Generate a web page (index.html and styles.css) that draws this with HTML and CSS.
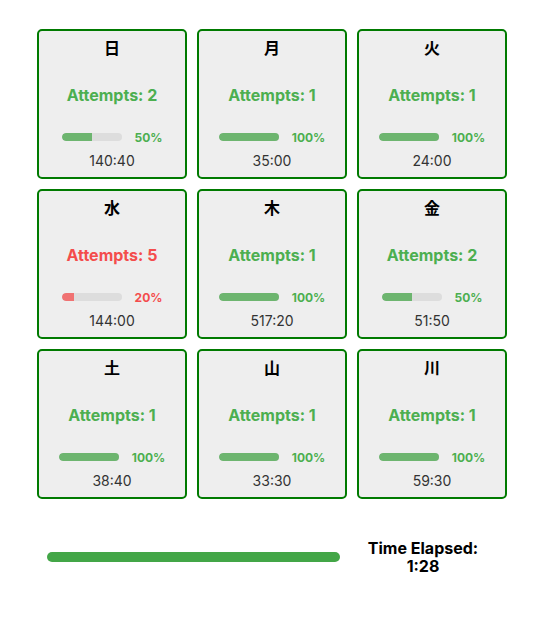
FILE: index.html
```html
<!DOCTYPE html>
<html>
<head>
<meta charset="utf-8">
<link rel="stylesheet" href="styles.css">
</head>
<body>
<div class="page">
  <div class="grid">
    <div class="card"><div class="kanji">日</div><div class="attempts">Attempts: 2</div><div class="prog"><div class="bar"><div class="fill" style="width:50%"></div></div><span class="pct">50%</span></div><div class="time">140:40</div></div>
    <div class="card"><div class="kanji">月</div><div class="attempts">Attempts: 1</div><div class="prog"><div class="bar"><div class="fill" style="width:100%"></div></div><span class="pct">100%</span></div><div class="time">35:00</div></div>
    <div class="card"><div class="kanji">火</div><div class="attempts">Attempts: 1</div><div class="prog"><div class="bar"><div class="fill" style="width:100%"></div></div><span class="pct">100%</span></div><div class="time">24:00</div></div>
    <div class="card bad"><div class="kanji">水</div><div class="attempts">Attempts: 5</div><div class="prog"><div class="bar"><div class="fill" style="width:20%"></div></div><span class="pct">20%</span></div><div class="time">144:00</div></div>
    <div class="card"><div class="kanji">木</div><div class="attempts">Attempts: 1</div><div class="prog"><div class="bar"><div class="fill" style="width:100%"></div></div><span class="pct">100%</span></div><div class="time">517:20</div></div>
    <div class="card"><div class="kanji">金</div><div class="attempts">Attempts: 2</div><div class="prog"><div class="bar"><div class="fill" style="width:50%"></div></div><span class="pct">50%</span></div><div class="time">51:50</div></div>
    <div class="card"><div class="kanji">土</div><div class="attempts">Attempts: 1</div><div class="prog"><div class="bar"><div class="fill" style="width:100%"></div></div><span class="pct">100%</span></div><div class="time">38:40</div></div>
    <div class="card"><div class="kanji">山</div><div class="attempts">Attempts: 1</div><div class="prog"><div class="bar"><div class="fill" style="width:100%"></div></div><span class="pct">100%</span></div><div class="time">33:30</div></div>
    <div class="card"><div class="kanji">川</div><div class="attempts">Attempts: 1</div><div class="prog"><div class="bar"><div class="fill" style="width:100%"></div></div><span class="pct">100%</span></div><div class="time">59:30</div></div>
  </div>
  <div class="footer">
    <div class="timer"></div>
    <div class="elapsed">Time Elapsed:<br>1:28</div>
  </div>
</div>
</body>
</html>
```
FILE: styles.css
```css
html, body {
  margin: 0;
  padding: 0;
  background: #fff;
  font-family: Inter, "Noto Sans CJK JP", sans-serif;
}
.page {
  padding: 29px 0 0 37px;
}
.grid {
  display: grid;
  grid-template-columns: repeat(3, 150px);
  grid-auto-rows: 150px;
  gap: 10px;
}
.card {
  box-sizing: border-box;
  border: 2px solid #007a00;
  border-radius: 5px;
  background: #eeeeee;
  padding: 6px 4px 0;
  display: flex;
  flex-direction: column;
  align-items: center;
}
.kanji {
  font-family: "Noto Sans CJK JP", sans-serif;
  font-weight: 700;
  font-size: 16px;
  line-height: 20px;
  color: #000;
}
.attempts {
  margin-top: 28px;
  font-size: 16px;
  line-height: 20px;
  font-weight: 700;
  color: #4caf50;
}
.bad .attempts, .bad .pct {
  color: #f44c4c;
}
.prog {
  margin-top: 25px;
  height: 14px;
  display: flex;
  align-items: center;
}
.bar {
  width: 60px;
  height: 8px;
  border-radius: 4px;
  background: #dddddd;
  overflow: hidden;
}
.fill {
  height: 100%;
  background: #6db56f;
  border-radius: 4px 0 0 4px;
}
.bad .fill {
  background: #f07272;
}
.pct {
  margin-left: 13px;
  font-size: 12px;
  font-weight: 700;
  color: #4caf50;
}
.time {
  margin-top: 8px;
  font-size: 14px;
  line-height: 18px;
  color: #333;
}
.footer {
  margin-top: 40px;
  display: flex;
  align-items: center;
}
.timer {
  margin-left: 10px;
  width: 293px;
  height: 10px;
  border-radius: 5px;
  background: #43a647;
}
.elapsed {
  width: 146px;
  margin-left: 10px;
  text-align: center;
  font-size: 16px;
  line-height: 18px;
  font-weight: 700;
  color: #000;
}
```
